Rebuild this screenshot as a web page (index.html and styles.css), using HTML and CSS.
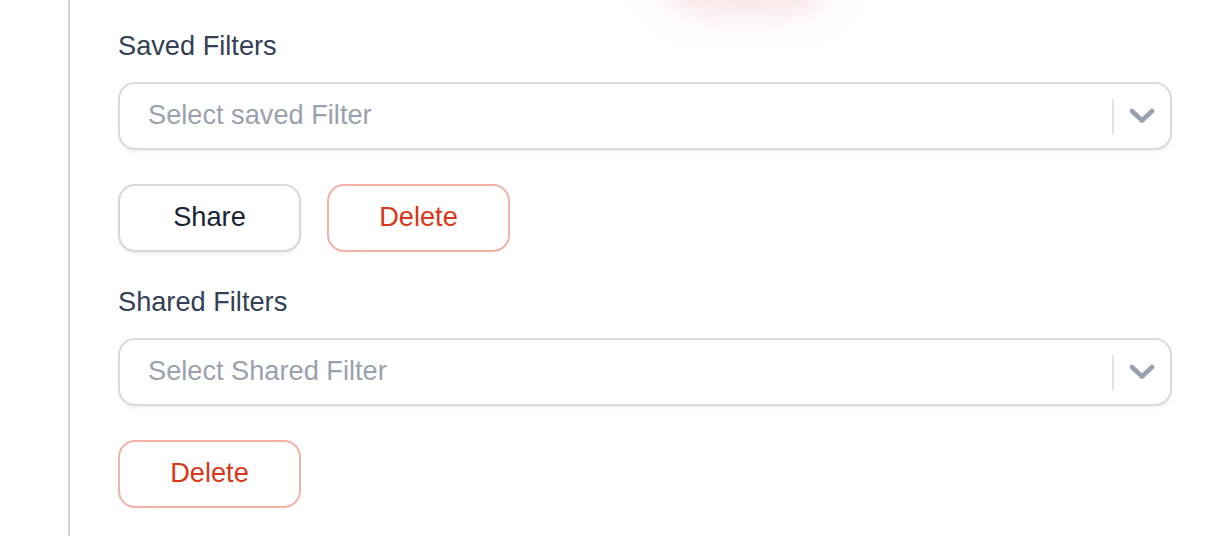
FILE: index.html
```html
<!DOCTYPE html>
<html lang="en">
<head>
<meta charset="utf-8">
<title>Filters</title>
<link rel="stylesheet" href="styles.css">
</head>
<body>
<div class="page">
  <div class="glow" aria-hidden="true"></div>
  <div class="panel">
    <section class="group">
      <div class="label">Saved Filters</div>
      <div class="select">
        <span class="placeholder">Select saved Filter</span>
        <span class="sep"></span>
        <span class="chev">
          <svg width="26" height="16" viewBox="0 0 26 16"><polyline points="3,3 13,12.5 23,3" fill="none" stroke="#9aa1ae" stroke-width="4.6" stroke-linecap="round" stroke-linejoin="round"/></svg>
        </span>
      </div>
      <div class="actions">
        <button class="btn">Share</button>
        <button class="btn danger">Delete</button>
      </div>
    </section>
    <section class="group second">
      <div class="label">Shared Filters</div>
      <div class="select">
        <span class="placeholder">Select Shared Filter</span>
        <span class="sep"></span>
        <span class="chev">
          <svg width="26" height="16" viewBox="0 0 26 16"><polyline points="3,3 13,12.5 23,3" fill="none" stroke="#9aa1ae" stroke-width="4.6" stroke-linecap="round" stroke-linejoin="round"/></svg>
        </span>
      </div>
      <div class="actions">
        <button class="btn danger">Delete</button>
      </div>
    </section>
  </div>
</div>
</body>
</html>
```
FILE: styles.css
```css
* { box-sizing: border-box; }
html, body {
  margin: 0;
  padding: 0;
  background: #ffffff;
  height: 100%;
  overflow: hidden;
}
body {
  font-family: "Liberation Sans", Arial, sans-serif;
  font-size: 27.2px;
}
.page {
  position: relative;
  height: 536px;
  padding-left: 68px;
}
.glow {
  position: absolute;
  left: 672px;
  top: -80px;
  width: 148px;
  height: 70px;
  border-radius: 35px;
  background: #f6d3d7;
  box-shadow: 0 4px 34px 18px rgba(240, 170, 178, 0.38);
}
.panel {
  height: 100%;
  border-left: 2px solid #d2d2d2;
  padding: 26px 48px 0 48px;
  width: 1152px;
}
.group.second { margin-top: 30px; }
.label {
  color: #344054;
  line-height: 40px;
  margin-bottom: 16px;
}
.select {
  display: flex;
  align-items: center;
  height: 68px;
  border: 2px solid #d6dae3;
  border-radius: 17px;
  background: #fff;
  box-shadow: 0 2px 3px rgba(16, 24, 40, 0.06);
  padding-left: 28px;
}
.placeholder {
  flex: 1;
  color: #9aa1ae;
  padding-bottom: 3px;
}
.sep {
  width: 2px;
  height: 35px;
  background: #dfe2e8;
}
.chev {
  display: flex;
  align-items: center;
  justify-content: center;
  width: 56px;
  height: 100%;
}
.chev svg { display: block; }
.actions {
  display: flex;
  gap: 26px;
  margin-top: 34px;
}
.btn {
  width: 183px;
  height: 68px;
  border: 2px solid #d7d7d7;
  border-radius: 17px;
  background: #fff;
  font-family: inherit;
  font-size: 27.2px;
  color: #1a2236;
  box-shadow: 0 2px 3px rgba(16, 24, 40, 0.06);
  padding: 0 0 3px 0;
  cursor: pointer;
}
.btn.danger {
  border-color: #f2b2a7;
  color: #da3619;
  box-shadow: none;
}
```
